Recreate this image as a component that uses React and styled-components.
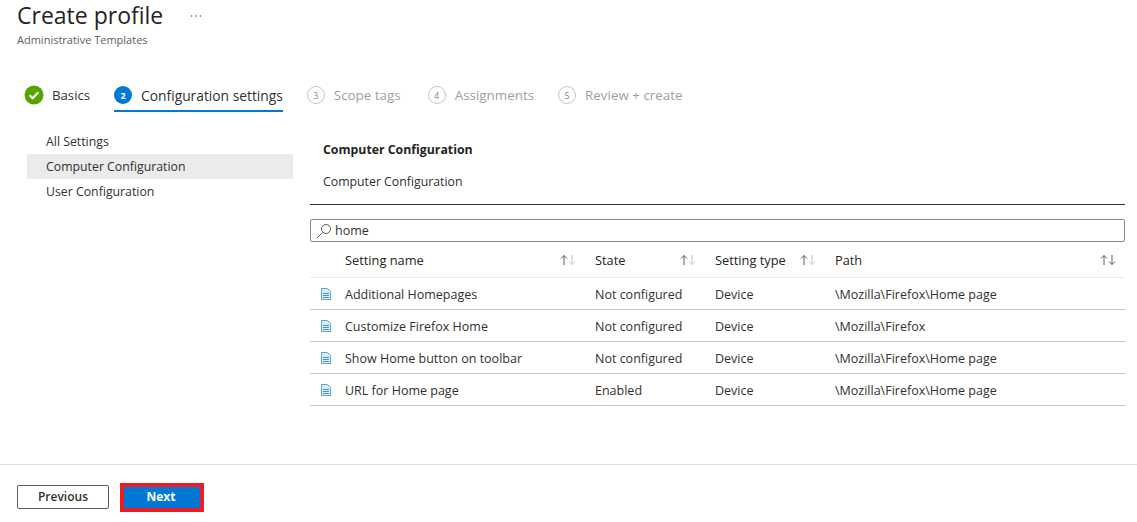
import React from 'react';
import styled, { createGlobalStyle } from 'styled-components';

const GlobalStyle = createGlobalStyle`
  html, body {
    margin: 0;
    padding: 0;
    background: #fff;
    overflow: hidden;
  }
  body {
    font-family: 'Open Sans', 'Noto Sans', 'Liberation Sans', sans-serif;
    font-size: 12.5px;
    color: #323130;
  }
`;

const Page = styled.div`
  width: 1137px;
  height: 522px;
  display: flex;
  flex-direction: column;
`;

const Header = styled.header`
  padding: 0 0 0 17px;
  height: 72px;
  box-sizing: border-box;
`;

const TitleRow = styled.div`
  display: flex;
  align-items: center;
  height: 31px;
  gap: 27px;
`;

const Title = styled.h1`
  margin: 0;
  font-size: 23px;
  font-weight: 400;
  line-height: 31px;
  color: #252423;
`;

const More = styled.svg`
  width: 12px;
  height: 4px;
  fill: #605e5c;
`;

const Subtitle = styled.div`
  font-size: 11px;
  line-height: 16px;
  margin-top: 1px;
  color: #605e5c;
`;

const Stepper = styled.nav`
  display: flex;
  padding-left: 24px;
  height: 40px;
  align-items: flex-start;
`;

const Step = styled.div`
  display: flex;
  align-items: center;
  gap: ${p => (p.$plain ? 8 : 9)}px;
  height: 40px;
  padding-top: 8px;
  box-sizing: border-box;
  margin-right: ${p => p.$mr}px;
  font-size: ${p => (p.$active ? 13.8 : p.$disabled ? 13.4 : 13.2)}px;
  font-weight: ${p => (p.$active ? 500 : 400)};
  color: ${p => (p.$disabled ? '#a19f9d' : '#323130')};
  border-bottom: 2px solid ${p => (p.$active ? '#0078d4' : 'transparent')};
`;

const StepNum = styled.span`
  width: 18px;
  height: 18px;
  box-sizing: border-box;
  border-radius: 50%;
  display: flex;
  align-items: center;
  justify-content: center;
  font-size: 9px;
  font-weight: ${p => (p.$active ? 700 : 400)};
  color: ${p => (p.$active ? '#fff' : '#8a8886')};
  background: ${p => (p.$active ? '#0078d4' : '#fff')};
  border: ${p => (p.$active ? 'none' : '1px solid #c8c6c4')};
`;

const Body = styled.main`
  flex: 1;
  display: flex;
  padding: 17px 12px 0 27px;
  gap: 17px;
`;

const SideNav = styled.aside`
  width: 266px;
  flex: none;
`;

const NavItem = styled.div`
  height: 25px;
  line-height: 25px;
  padding-left: 19px;
  font-size: 12.3px;
  background: ${p => (p.$selected ? '#ebebeb' : 'transparent')};
  color: #323130;
`;

const Content = styled.section`
  flex: 1;
  min-width: 0;
`;

const SectionHead = styled.div`
  padding: 12px 0 0 13px;
  height: 76px;
  box-sizing: border-box;
  border-bottom: 1px solid #323130;
`;

const SectionTitle = styled.div`
  font-weight: 700;
  font-size: 12.3px;
  line-height: 17px;
  color: #252423;
`;

const SectionText = styled.div`
  margin-top: 15px;
  line-height: 17px;
  font-size: 12.3px;
`;

const SearchBox = styled.div`
  margin-top: 14px;
  height: 23px;
  box-sizing: border-box;
  border: 1px solid #8a8886;
  border-radius: 2px;
  display: flex;
  align-items: center;
  gap: 3px;
  padding-left: 5px;
  color: #323130;
`;

const Grid = styled.div`
  display: grid;
  grid-template-columns: 35px 250px 120px 120px 290px;
`;

const Row = styled.div`
  display: contents;
  & > * {
    height: ${p => (p.$head ? 36 : 32)}px;
    padding-top: ${p => (p.$head ? 0 : 1)}px;
    box-sizing: border-box;
    display: flex;
    align-items: center;
    border-bottom: 1px solid ${p => (p.$head ? '#edebe9' : '#c8c6c4')};
    font-weight: ${p => (p.$head ? 500 : 400)};
  }
`;

const Cell = styled.div`
  justify-content: space-between;
  padding-right: ${p => (p.$last ? 8 : 18)}px;
  color: ${p => (p.$head ? '#252423' : '#323130')};
  font-size: ${p => (p.$head ? '12.8px' : '12.5px')};
  white-space: nowrap;
  min-width: 0;
`;

const IconCell = styled.div`
  padding-left: 11px;
`;

const Footer = styled.footer`
  height: 58px;
  flex: none;
  box-sizing: border-box;
  border-top: 1px solid #e1dfdd;
  display: flex;
  align-items: center;
  padding: 7px 0 0 17px;
  gap: 11px;
`;

const PrevButton = styled.button`
  width: 92px;
  height: 24px;
  background: #fff;
  border: 1px solid #605e5c;
  border-radius: 2px;
  font: 600 12px 'Open Sans', sans-serif;
  color: #323130;
  padding: 0 0 2px;
`;

const NextButton = styled.button`
  width: 84px;
  height: 29px;
  background: #0078d4;
  border: 4px solid #ed1c24;
  font: 700 12px 'Open Sans', sans-serif;
  color: #fff;
  padding: 0 2px 2px 0;
`;

const CheckIcon = () => (
  <svg width="20" height="20" viewBox="0 0 20 20">
    <circle cx="10" cy="10" r="9.5" fill="#57a300" />
    <path d="M5.6 10.3l3 3 5.8-6" fill="none" stroke="#fff" strokeWidth="2.2" />
  </svg>
);

const SearchIcon = () => (
  <svg width="16" height="16" viewBox="0 0 16 16" fill="none" stroke="#605e5c" strokeWidth="1">
    <circle cx="10" cy="6" r="4.5" />
    <path d="M6.7 9.3L1 15" />
  </svg>
);

const SortIcon = ({ dark }) => (
  <svg width="18" height="12" viewBox="0 0 18 12" fill="none" strokeWidth="1">
    <path d="M5 11V1.5M2 4.5l3-3 3 3" stroke="#605e5c" />
    <path d="M13 1v9.5M10 7.5l3 3 3-3" stroke={dark ? '#605e5c' : '#c8c6c4'} />
  </svg>
);

const DocIcon = () => (
  <svg width="10" height="12" viewBox="0 0 10 12">
    <path d="M.5.5h6l3 3v8h-9z" fill="#deecf9" stroke="#5ea5e0" />
    <path d="M2 5.5h6M2 7.5h6M2 9.5h6" stroke="#3f95e0" />
  </svg>
);

const settings = [
  { name: 'Additional Homepages', state: 'Not configured', type: 'Device', path: '\\Mozilla\\Firefox\\Home page' },
  { name: 'Customize Firefox Home', state: 'Not configured', type: 'Device', path: '\\Mozilla\\Firefox' },
  { name: 'Show Home button on toolbar', state: 'Not configured', type: 'Device', path: '\\Mozilla\\Firefox\\Home page' },
  { name: 'URL for Home page', state: 'Enabled', type: 'Device', path: '\\Mozilla\\Firefox\\Home page' },
];

const App = () => {
  return (
    <Page>
      <GlobalStyle />
      <Header>
        <TitleRow>
          <Title>Create profile</Title>
          <More viewBox="0 0 12 4">
            <circle cx="1.5" cy="2" r="0.8" />
            <circle cx="6" cy="2" r="0.8" />
            <circle cx="10.5" cy="2" r="0.8" />
          </More>
        </TitleRow>
        <Subtitle>Administrative Templates</Subtitle>
      </Header>
      <Stepper>
        <Step $mr={24} $plain><CheckIcon />Basics</Step>
        <Step $mr={24} $active><StepNum $active>2</StepNum>Configuration settings</Step>
        <Step $mr={27} $disabled><StepNum>3</StepNum>Scope tags</Step>
        <Step $mr={24} $disabled><StepNum>4</StepNum>Assignments</Step>
        <Step $mr={0} $disabled><StepNum>5</StepNum>Review + create</Step>
      </Stepper>
      <Body>
        <SideNav>
          <NavItem>All Settings</NavItem>
          <NavItem $selected>Computer Configuration</NavItem>
          <NavItem>User Configuration</NavItem>
        </SideNav>
        <Content>
          <SectionHead>
            <SectionTitle>Computer Configuration</SectionTitle>
            <SectionText>Computer Configuration</SectionText>
          </SectionHead>
          <SearchBox><SearchIcon />home</SearchBox>
          <Grid>
            <Row $head>
              <IconCell />
              <Cell $head>Setting name<SortIcon /></Cell>
              <Cell $head>State<SortIcon /></Cell>
              <Cell $head>Setting type<SortIcon /></Cell>
              <Cell $head $last>Path<SortIcon dark /></Cell>
            </Row>
            {settings.map((s, i) => (
              <Row key={i}>
                <IconCell><DocIcon /></IconCell>
                <Cell>{s.name}</Cell>
                <Cell>{s.state}</Cell>
                <Cell>{s.type}</Cell>
                <Cell $last>{s.path}</Cell>
              </Row>
            ))}
          </Grid>
        </Content>
      </Body>
      <Footer>
        <PrevButton>Previous</PrevButton>
        <NextButton>Next</NextButton>
      </Footer>
    </Page>
  );
};

export default App;
